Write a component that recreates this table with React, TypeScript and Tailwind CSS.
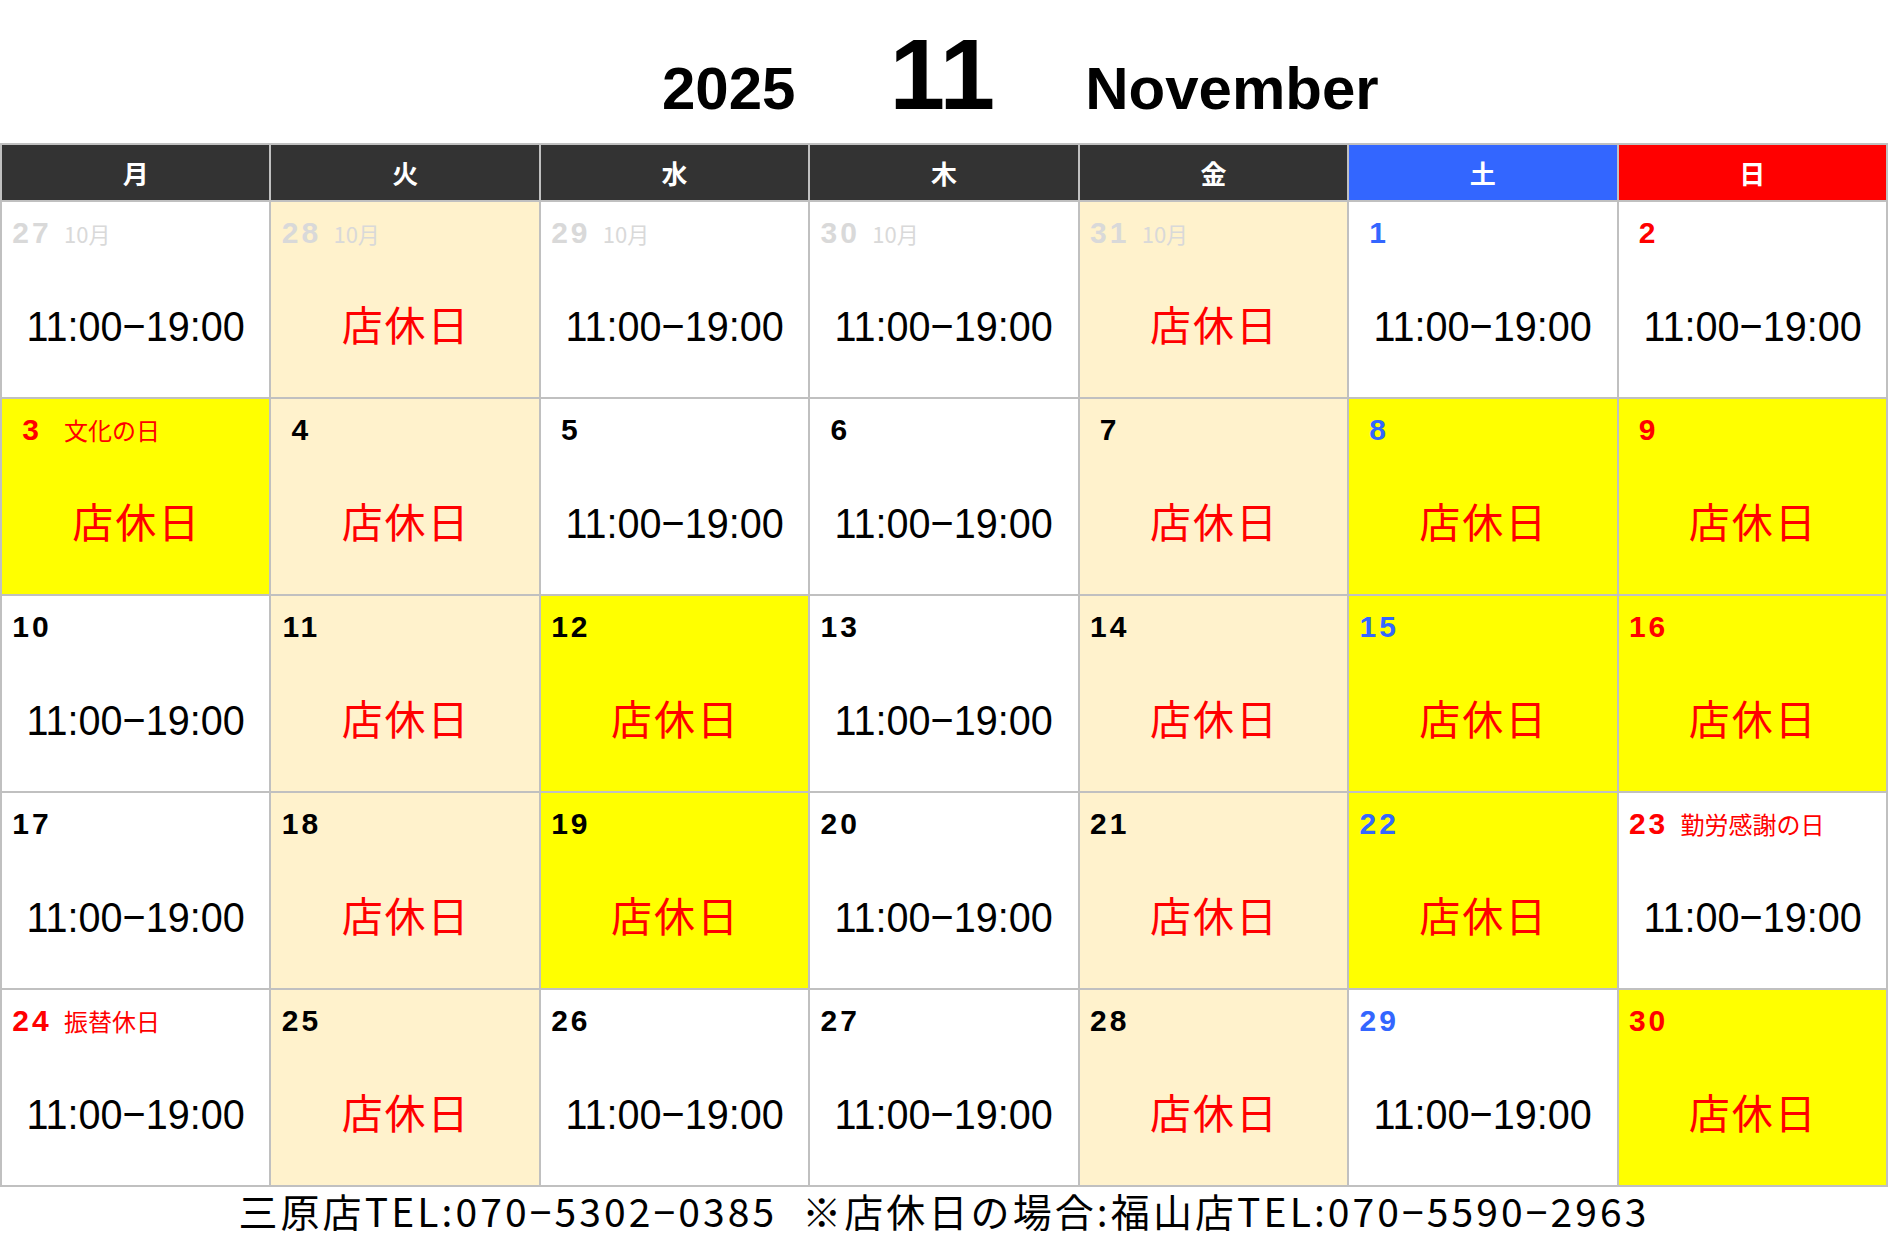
type Kind = "time" | "closed";
type Tone = "prev" | "black" | "blue" | "red";
type Bg = "white" | "gold" | "yellow";

type Day = {
  d: number;
  tone: Tone;
  bg: Bg;
  kind: Kind;
  note?: string;
};

const headers = [
  { label: "月", bg: "bg-[#333333]" },
  { label: "火", bg: "bg-[#333333]" },
  { label: "水", bg: "bg-[#333333]" },
  { label: "木", bg: "bg-[#333333]" },
  { label: "金", bg: "bg-[#333333]" },
  { label: "土", bg: "bg-[#3366ff]" },
  { label: "日", bg: "bg-[#ff0000]" },
];

const days: Day[] = [
  { d: 27, tone: "prev", bg: "white", kind: "time", note: "10月" },
  { d: 28, tone: "prev", bg: "gold", kind: "closed", note: "10月" },
  { d: 29, tone: "prev", bg: "white", kind: "time", note: "10月" },
  { d: 30, tone: "prev", bg: "white", kind: "time", note: "10月" },
  { d: 31, tone: "prev", bg: "gold", kind: "closed", note: "10月" },
  { d: 1, tone: "blue", bg: "white", kind: "time" },
  { d: 2, tone: "red", bg: "white", kind: "time" },

  { d: 3, tone: "red", bg: "yellow", kind: "closed", note: "文化の日" },
  { d: 4, tone: "black", bg: "gold", kind: "closed" },
  { d: 5, tone: "black", bg: "white", kind: "time" },
  { d: 6, tone: "black", bg: "white", kind: "time" },
  { d: 7, tone: "black", bg: "gold", kind: "closed" },
  { d: 8, tone: "blue", bg: "yellow", kind: "closed" },
  { d: 9, tone: "red", bg: "yellow", kind: "closed" },

  { d: 10, tone: "black", bg: "white", kind: "time" },
  { d: 11, tone: "black", bg: "gold", kind: "closed" },
  { d: 12, tone: "black", bg: "yellow", kind: "closed" },
  { d: 13, tone: "black", bg: "white", kind: "time" },
  { d: 14, tone: "black", bg: "gold", kind: "closed" },
  { d: 15, tone: "blue", bg: "yellow", kind: "closed" },
  { d: 16, tone: "red", bg: "yellow", kind: "closed" },

  { d: 17, tone: "black", bg: "white", kind: "time" },
  { d: 18, tone: "black", bg: "gold", kind: "closed" },
  { d: 19, tone: "black", bg: "yellow", kind: "closed" },
  { d: 20, tone: "black", bg: "white", kind: "time" },
  { d: 21, tone: "black", bg: "gold", kind: "closed" },
  { d: 22, tone: "blue", bg: "yellow", kind: "closed" },
  { d: 23, tone: "red", bg: "white", kind: "time", note: "勤労感謝の日" },

  { d: 24, tone: "red", bg: "white", kind: "time", note: "振替休日" },
  { d: 25, tone: "black", bg: "gold", kind: "closed" },
  { d: 26, tone: "black", bg: "white", kind: "time" },
  { d: 27, tone: "black", bg: "white", kind: "time" },
  { d: 28, tone: "black", bg: "gold", kind: "closed" },
  { d: 29, tone: "blue", bg: "white", kind: "time" },
  { d: 30, tone: "red", bg: "yellow", kind: "closed" },
];

const toneClass: Record<Tone, string> = {
  prev: "text-[#d9d9d9]",
  black: "text-black",
  blue: "text-[#3366ff]",
  red: "text-[#ff0000]",
};

const bgClass: Record<Bg, string> = {
  white: "bg-white",
  gold: "bg-[#fff2cc]",
  yellow: "bg-[#ffff00]",
};

const DayCell = ({ day }: { day: Day }) => {
  return (
    <div className={`${bgClass[day.bg]} h-[195px] flex flex-col`}>
      <div className="h-[46px] pt-[16px] flex items-baseline">
        <span
          className={`w-[57px] pl-[3px] text-center font-['Liberation_Sans',Arial,sans-serif] font-bold text-[30px] leading-none tracking-[3px] ${toneClass[day.tone]}`}
        >
          {day.d}
        </span>
        {day.note && (
          <span
            className={`ml-[5px] font-['Noto_Sans_CJK_JP',sans-serif] ${day.tone === "prev" ? "text-[22px]" : "text-[24px]"} leading-none ${toneClass[day.tone]}`}
          >
            {day.note}
          </span>
        )}
      </div>
      <div className="mt-[56px] h-[44px] flex items-center justify-center leading-none">
        {day.kind === "time" ? (
          <span className="font-['Liberation_Sans',sans-serif] text-[43px] text-black scale-x-[0.92]">
            11:00−19:00
          </span>
        ) : (
          <span className="font-['Noto_Sans_CJK_JP',sans-serif] text-[41px] text-[#ff0000] tracking-[2px] pl-[2px] pb-[6px]">
            店休日
          </span>
        )}
      </div>
    </div>
  );
};

const App = () => {
  return (
    <div className="w-[1888px] h-[1252px] bg-white overflow-hidden">
      <div className="h-[143px] pl-[662px] pt-[24px] flex items-baseline font-['Liberation_Sans',Arial,sans-serif] font-bold text-black leading-none">
        <span className="text-[60px]">2025</span>
        <span className="ml-[94px] text-[100px]">11</span>
        <span className="ml-[90px] text-[60px]">November</span>
      </div>

      <div className="bg-[#c0c0c0] p-[2px] grid grid-cols-7 gap-[2px]">
        {headers.map((h) => (
          <div
            key={h.label}
            className={`${h.bg} h-[55px] flex items-center justify-center text-white font-['Noto_Sans_CJK_JP',sans-serif] font-bold text-[26px] leading-none`}
          >
            {h.label}
          </div>
        ))}
        {days.map((day, i) => (
          <DayCell key={i} day={day} />
        ))}
      </div>

      <div className="mt-[4px] text-center font-['Noto_Sans_CJK_JP',sans-serif] text-[39px] leading-none text-black tracking-[3.1px]">
        三原店TEL:070−5302−0385
        <span className="inline-block w-[25px]"></span>
        ※店休日の場合:福山店TEL:070−5590−2963
      </div>
    </div>
  );
};

export default App;
